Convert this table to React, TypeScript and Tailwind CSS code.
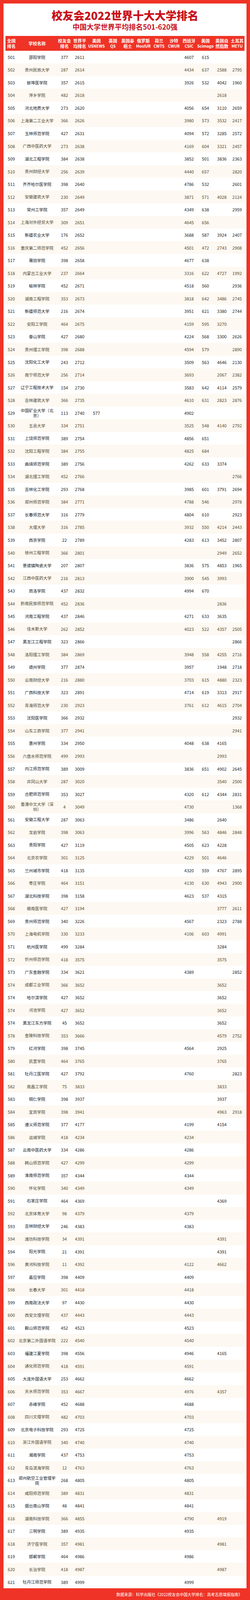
type Row = [string, string, string, string, string, string, string, string, string];

// rank | name | 校友会 | 世界平均 | USNEWS | CSIC | Scimago | 自然指数 | METU
const RAW = `501|邵阳学院|377|2611||4607|615||
502|贵州民族大学|287|2614||4434|637|2588|2795
503|蚌埠医学院|357|2615||3926|532|4042|1960
504|萍乡学院|482|2618||||2618|
505|河北地质大学|273|2620||4056|654|3110|2659
506|上海第二工业大学|366|2626||3980|573|3532|2417
507|玉林师范学院|427|2631||4094|572|3285|2572
508|广西中医药大学|273|2638||4169|604|3321|2457
509|湖北工程学院|384|2638||3852|501|3836|2363
510|贵州财经大学|256|2639||4440|657||2820
511|齐齐哈尔医学院|398|2640||4786|532||2601
512|安徽建筑大学|230|2649||3871|571|4028|2124
513|常州工学院|357|2649||4349|638||2959
514|上海对外经贸大学|309|2651||4645|656||
515|新疆农业大学|176|2652||3688|587|3924|2407
516|重庆第二师范学院|452|2656||4501|472|2743|2908
517|莆田学院|398|2658||4677|638||
518|内蒙古工业大学|237|2664||3316|622|4727|1992
519|榆林学院|452|2671||4518|560||2936
520|湖南工程学院|353|2673||3818|642|3486|2745
521|新疆师范大学|216|2674||3951|621|3380|2744
522|安阳工学院|464|2675||4159|595|3270|
523|泰山学院|427|2680||4224|568|3300|2626
524|贵州理工学院|398|2688||4594|579||2890
525|沈阳化工大学|243|2712||3509|563|4646|2130
526|南宁师范大学|256|2714||3693||2067|2382
527|辽宁工程技术大学|154|2730||3583|642|4114|2579
528|吉林建筑大学|366|2735||4610|631|2823|2876
529|中国矿业大学（北京）|113|2740|577|4902|||
530|五邑大学|334|2751||3525|548|4140|2792
531|上饶师范学院|389|2754||4856|651||
532|沈阳工程学院|384|2755||4825|684||
533|曲靖师范学院|389|2756||4262|633|3374|
534|湖北理工学院|452|2766|||||2766
535|吉林化工学院|293|2768||3985|601|3791|2694
536|郑州师范学院|384|2771||4788|546||2978
537|长春师范大学|316|2779||4804|610||2923
538|大理大学|316|2785||3932|550|4214|2443
539|西京学院|22|2789||4283|613|3452|2807
540|徐州工程学院|366|2801||||2949|2652
541|景德镇陶瓷大学|207|2807||3836|575|4853|1965
542|江西中医药大学|216|2813||3900|545|3993|
543|商洛学院|437|2832||4994|670||
544|黔南民族师范学院|452|2836||||2836|
545|河南工程学院|437|2846||4271|633|3635|
546|佳木斯大学|262|2852||4023|522|4357|2505
547|黑龙江工程学院|323|2866|||||2866
548|洛阳理工学院|384|2869||3948|558|4255|2716
549|德州学院|377|2874||3957||1948|2718
550|云南财经大学|216|2880||3703|615|4880|2323
551|广西科技大学|323|2891||4714|619|3313|2917
552|青海师范大学|230|2923||3761|612|4615|2704
553|沈阳医学院|366|2932|||||2932
554|山东工商学院|377|2941|||||2941
555|惠州学院|334|2950||4048|638|4165|
556|六盘水师范学院|499|2993||||2993|
557|内江师范学院|389|3009||3836|651|4902|2645
558|井冈山大学|287|3020||||3540|2500
559|合肥师范学院|353|3027||4320|612|4344|2831
560|香港中文大学（深圳）|4|3049||4730|||1368
561|安徽工程大学|287|3063||3486||2640|
562|龙岩学院|398|3063||3996|563|4846|2848
563|贵阳学院|427|3119||4505|623|4228|
564|北京农学院|301|3125||4229|501|4646|
565|兰州城市学院|418|3135||4320|559|4767|2895
566|枣庄学院|464|3151||4130|630|4943|2900
567|湖北科技学院|398|3158||4623|537|4315|
568|赣南医学院|427|3194||||3777|2611
569|贵州师范学院|340|3226||4567||2323|2788
570|上海电机学院|330|3233||4106|603|4991|
571|杭州医学院|499|3284||||3284|
572|忻州师范学院|418|3575||||3575|
573|广东金融学院|334|3621||4389|||2852
574|成都工业学院|366|3652||||3652|
574|哈尔滨学院|427|3652||||3652|
574|河池学院|427|3652||||3652|
574|黑龙江东方学院|45|3652||||3652|
578|金陵科技学院|353|3666||||4579|2752
579|红河学院|398|3745||4564||2925|
580|凯里学院|464|3765||||3765|
581|牡丹江医学院|427|3792||4760|||2823
582|南昌工学院|75|3833||||3833|
583|铜仁学院|398|3937||||3937|
584|宜宾学院|398|3941||||4963|2918
585|遵义师范学院|377|4177||4199||4154|
586|运城学院|418|4234||4234|||
587|云南中医药大学|334|4286||4286|||
588|韩山师范学院|427|4299||4299|||
589|淮南师范学院|357|4344||4344|||
590|怀化学院|340|4349||4349|||
591|石家庄学院|464|4369||||4369|
592|北京体育大学|98|4379||4379|||
593|吉林财经大学|246|4383||4383|||
594|潍坊科技学院|34|4391||||4391|
594|阳光学院|21|4391||||4391|
596|黄河科技学院|11|4392||4122||4662|
597|嘉应学院|398|4409||4409|||
598|长春大学|301|4418||4418|||
599|西南政法大学|97|4430||4430|||
600|西安文理学院|437|4443||4443|||
601|鞍山师范学院|452|4523||4523|||
602|北京第二外国语学院|222|4540||4540|||
603|福建江夏学院|398|4556||4946||4165|
604|通化师范学院|418|4591||4591|||
605|大连外国语大学|253|4662||4662|||
606|天水师范学院|353|4667||4976||4357|
607|赤峰学院|452|4688||4688|||
608|四川文理学院|482|4703||4703|||
609|北京电子科技学院|293|4725||4725|||
610|浙江外国语学院|340|4740||4740|||
611|湘南学院|437|4753||4753|||
612|青岛滨海学院|12|4763||4763|||
613|郑州航空工业管理学院|268|4805||4805|||
614|咸阳师范学院|389|4831||4831|||
615|烟台南山学院|48|4841||4841|||
616|湖南科技学院|366|4855||4790||4919|
617|三明学院|389|4935||4935|||
618|济宁医学院|357|4981||||4981|
619|邯郸学院|464|4986||4986|||
620|长治学院|418|4987||||4987|
621|牡丹江师范学院|389|4999||4999|||`;

const rows: Row[] = RAW.split("\n").map((l) => l.split("|") as Row);

const HEADERS: [string, string][] = [
  ["全国", "排名"],
  ["学校名称", ""],
  ["校友会", "排名"],
  ["世界平", "均排名"],
  ["美国", "USNEWS"],
  ["英国", "QS"],
  ["英国泰", "晤士"],
  ["俄罗斯", "MosIUR"],
  ["荷兰", "CWTS"],
  ["沙特", "CWUR"],
  ["西班牙", "CSIC"],
  ["美国", "Scimago"],
  ["英国自", "然指数"],
  ["土耳其", "METU"],
];

const GRID =
  "grid grid-cols-[30px_102px_38px_40px_46px_38px_38px_42px_38px_38px_40px_44px_40px_38px]";

function HeaderRow() {
  return (
    <div className={`${GRID} h-[37.6px] bg-[#ef3326] text-white font-bold`}>
      {HEADERS.map(([a, b], i) => (
        <div key={i} className="flex flex-col items-center justify-center leading-[14px]">
          <span className="text-[11px] whitespace-nowrap">{a}</span>
          {b && (
            <span
              className={`whitespace-nowrap ${/[A-Za-z]/.test(b) ? "text-[10px]" : "text-[11px]"}`}
            >
              {b}
            </span>
          )}
        </div>
      ))}
    </div>
  );
}

function DataRow({ r, i }: { r: Row; i: number }) {
  const [rank, name, xyh, world, usnews, csic, sci, nature, metu] = r;
  const cells = [rank, name, xyh, world, usnews, "", "", "", "", "", csic, sci, nature, metu];
  const even = i % 2 === 1;
  return (
    <div
      className={`${GRID} h-[32.537px] ${even ? "bg-[#fdf8f1] text-[#54492f]" : "bg-white text-[#222222]"}`}
    >
      {cells.map((c, j) => (
        <div
          key={j}
          className={`flex items-center justify-center text-center ${
            j === 1 ? "px-[2px] text-[10.5px] leading-[13px]" : "text-[11px]"
          }`}
        >
          {c}
        </div>
      ))}
    </div>
  );
}

export default function App() {
  return (
    <div className="w-[640px] h-[4096px] flex flex-col overflow-hidden bg-[#ef3326] pt-[9.4px] font-['Noto_Sans_CJK_SC',sans-serif]">
      <div className="mx-[9px] bg-white px-[5px]">
        <div className="h-[82.8px] flex flex-col items-center pt-[15px]">
          <h1 className="text-[28px] leading-[30px] font-black text-[#c8101a]">
            校友会2022世界十大大学排名
          </h1>
          <h2 className="mt-[4px] text-[18px] leading-[20px] font-bold text-[#c8101a]">
            中国大学世界平均排名501-620强
          </h2>
        </div>
        <HeaderRow />
        {rows.map((r, i) => (
          <DataRow key={i} r={r} i={i} />
        ))}
      </div>
      <div className="flex-1 flex items-center justify-end pr-[20px] text-[10px] text-white">
        数据来源：科学出版社《2022校友会中国大学排名：高考志愿填报指南》
      </div>
    </div>
  );
}
